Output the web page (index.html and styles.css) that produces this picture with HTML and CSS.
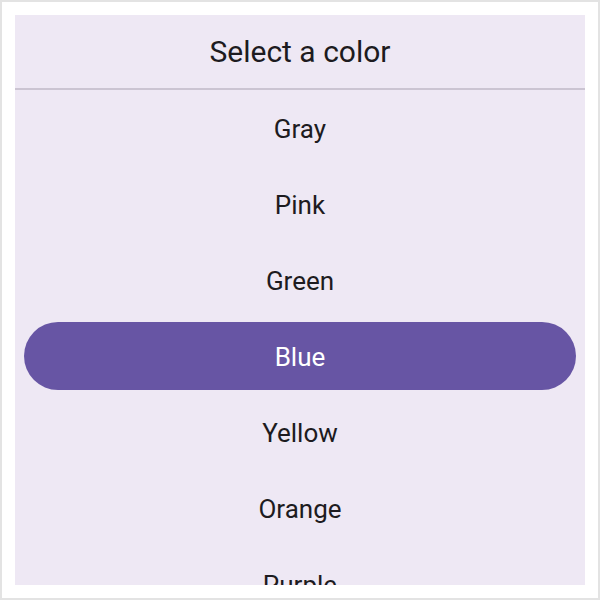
FILE: index.html
```html
<!DOCTYPE html>
<html>
<head>
<meta charset="utf-8">
<link rel="stylesheet" href="styles.css">
</head>
<body>
<div class="frame">
  <div class="dialog">
    <div class="title">Select a color</div>
    <div class="divider"></div>
    <ul class="list">
      <li class="item">Gray</li>
      <li class="item">Pink</li>
      <li class="item">Green</li>
      <li class="item selected"><span class="pill">Blue</span></li>
      <li class="item">Yellow</li>
      <li class="item">Orange</li>
      <li class="item">Purple</li>
    </ul>
  </div>
</div>
</body>
</html>
```
FILE: styles.css
```css
html, body {
  margin: 0;
  padding: 0;
  background: #ffffff;
}
.frame {
  box-sizing: border-box;
  width: 600px;
  height: 600px;
  border: 2px solid #e3e3e3;
  padding: 13px;
  background: #ffffff;
}
.dialog {
  width: 570px;
  height: 570px;
  background: #eee8f4;
  overflow: hidden;
  font-family: Roboto, "Noto Sans", sans-serif;
  color: #1d1b20;
}
.title {
  height: 73px;
  line-height: 74px;
  text-align: center;
  font-size: 30px;
}
.divider {
  height: 2px;
  background: #cbc4d2;
}
.list {
  list-style: none;
  margin: 0;
  padding: 0;
}
.item {
  height: 76px;
  line-height: 78px;
  text-align: center;
  font-size: 26px;
  padding: 0 9px;
}
.item.selected {
  display: flex;
  align-items: center;
}
.pill {
  flex: 1;
  height: 68px;
  line-height: 70px;
  border-radius: 34px;
  background: #6755a4;
  color: #ffffff;
}
```
